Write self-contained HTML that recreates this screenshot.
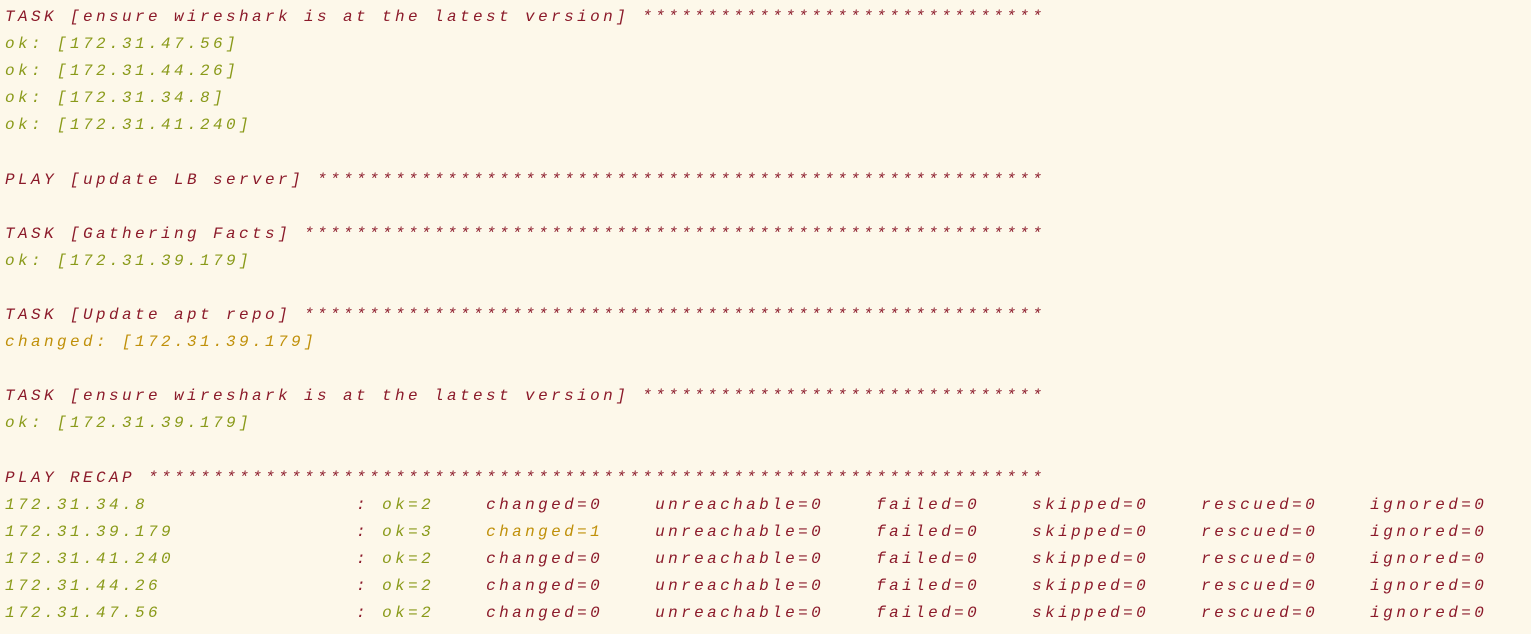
<!DOCTYPE html>
<html><head><meta charset="utf-8"><style>
html,body{margin:0;padding:0;background:#fdf8ea;width:1531px;height:634px;overflow:hidden}
pre{margin:0;padding:4px 0 0 5px;font-family:"Liberation Mono",monospace;font-style:italic;font-size:16px;letter-spacing:3.4px;line-height:27.1px;color:#8b1a2a}
.g{color:#8a9a1a}.y{color:#c0900a}.r{color:#8b1a2a}
</style></head><body><pre>TASK [ensure wireshark is at the latest version] *******************************
<span class="g">ok: [172.31.47.56]</span>
<span class="g">ok: [172.31.44.26]</span>
<span class="g">ok: [172.31.34.8]</span>
<span class="g">ok: [172.31.41.240]</span>

PLAY [update LB server] ********************************************************

TASK [Gathering Facts] *********************************************************
<span class="g">ok: [172.31.39.179]</span>

TASK [Update apt repo] *********************************************************
<span class="y">changed: [172.31.39.179]</span>

TASK [ensure wireshark is at the latest version] *******************************
<span class="g">ok: [172.31.39.179]</span>

PLAY RECAP *********************************************************************
<span class="g">172.31.34.8               </span> : <span class="g">ok=2   </span> changed=0    unreachable=0    failed=0    skipped=0    rescued=0    ignored=0
<span class="g">172.31.39.179             </span> : <span class="g">ok=3   </span> <span class="y">changed=1   </span> unreachable=0    failed=0    skipped=0    rescued=0    ignored=0
<span class="g">172.31.41.240             </span> : <span class="g">ok=2   </span> changed=0    unreachable=0    failed=0    skipped=0    rescued=0    ignored=0
<span class="g">172.31.44.26              </span> : <span class="g">ok=2   </span> changed=0    unreachable=0    failed=0    skipped=0    rescued=0    ignored=0
<span class="g">172.31.47.56              </span> : <span class="g">ok=2   </span> changed=0    unreachable=0    failed=0    skipped=0    rescued=0    ignored=0
</pre></body></html>
